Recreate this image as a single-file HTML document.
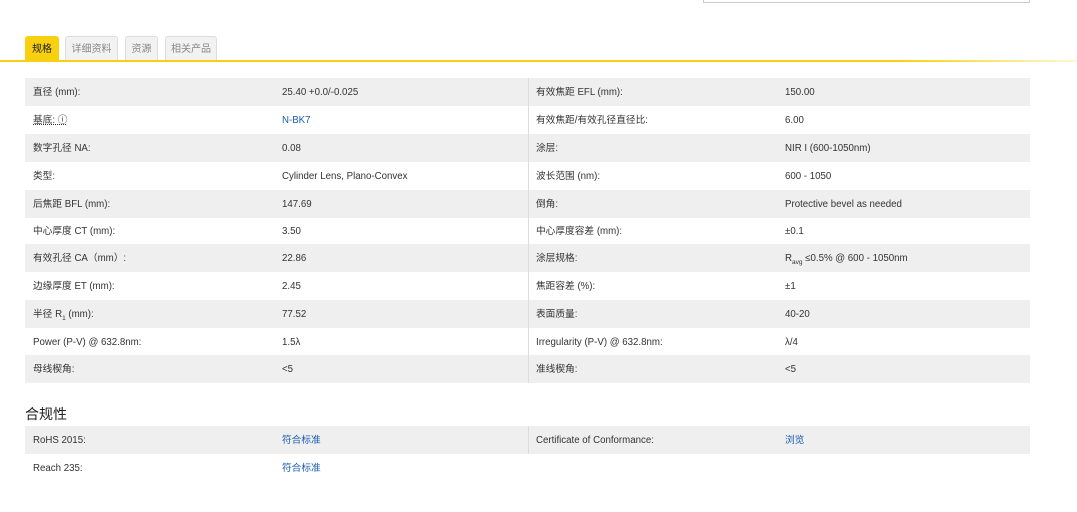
<!DOCTYPE html>
<html><head><meta charset="utf-8"><style>
*{margin:0;padding:0;box-sizing:border-box}
body{width:1077px;height:512px;background:#fff;position:relative;overflow:hidden;font-family:"Liberation Sans","Noto Sans CJK SC",sans-serif;color:#333;font-size:9.7px}
.inp{position:absolute;left:703px;top:-2px;width:327px;height:5px;border:1px solid #ccc;border-top:none}
.tab{position:absolute;top:36px;height:25px;border:1px solid #ddd;border-bottom:none;border-radius:3px 3px 0 0;background:#f2f2f2;color:#888;font-size:10px;line-height:26px;text-align:center}
.tab.a{background:#f8d00f;border-color:#f8d00f;color:#222}
.line{position:absolute;left:0;top:60px;width:1077px;height:2px;background:linear-gradient(90deg,#f8d00f 0,#f8d00f 83%,#fff7d0 100%)}
.row{position:absolute;left:25px;width:1005px;height:28px;line-height:30px}
.row.g{background:#efefef}
.row span{position:absolute;top:0;white-space:nowrap}
.l1{left:8px}.v1{left:257px}.l2{left:511px}.v2{left:760px}
.div{position:absolute;left:503px;top:0;width:1px;height:28px;background:#ddd}
a{color:#1a5bb0;text-decoration:none}
h3{position:absolute;left:25px;top:404px;font-size:14px;font-weight:normal;color:#222}
sub{font-size:6.5px}
</style></head><body>
<div class="inp"></div>
<div class="tab a" style="left:25px;width:34px">规格</div>
<div class="tab" style="left:65px;width:53px">详细资料</div>
<div class="tab" style="left:125px;width:33px">资源</div>
<div class="tab" style="left:165px;width:52px">相关产品</div>
<div class="line"></div>

<div class="row g" style="top:78px"><span class="l1">直径 (mm):</span><span class="v1">25.40 +0.0/-0.025</span><i class="div"></i><span class="l2">有效焦距 EFL (mm):</span><span class="v2">150.00</span></div>
<div class="row" style="top:106px"><span class="l1" style="text-decoration:underline dotted">基底: ⓘ</span><span class="v1"><a>N-BK7</a></span><i class="div"></i><span class="l2">有效焦距/有效孔径直径比:</span><span class="v2">6.00</span></div>
<div class="row g" style="top:134px"><span class="l1">数字孔径 NA:</span><span class="v1">0.08</span><i class="div"></i><span class="l2">涂层:</span><span class="v2">NIR I (600-1050nm)</span></div>
<div class="row" style="top:162px"><span class="l1">类型:</span><span class="v1">Cylinder Lens, Plano-Convex</span><i class="div"></i><span class="l2">波长范围 (nm):</span><span class="v2">600 - 1050</span></div>
<div class="row g" style="top:190px"><span class="l1">后焦距 BFL (mm):</span><span class="v1">147.69</span><i class="div"></i><span class="l2">倒角:</span><span class="v2">Protective bevel as needed</span></div>
<div class="row" style="top:217px"><span class="l1">中心厚度 CT (mm):</span><span class="v1">3.50</span><i class="div"></i><span class="l2">中心厚度容差 (mm):</span><span class="v2">±0.1</span></div>
<div class="row g" style="top:244px"><span class="l1">有效孔径 CA（mm）:</span><span class="v1">22.86</span><i class="div"></i><span class="l2">涂层规格:</span><span class="v2">R<sub>avg</sub> ≤0.5% @ 600 - 1050nm</span></div>
<div class="row" style="top:272px"><span class="l1">边缘厚度 ET (mm):</span><span class="v1">2.45</span><i class="div"></i><span class="l2">焦距容差 (%):</span><span class="v2">±1</span></div>
<div class="row g" style="top:300px"><span class="l1">半径 R<sub>1</sub> (mm):</span><span class="v1">77.52</span><i class="div"></i><span class="l2">表面质量:</span><span class="v2">40-20</span></div>
<div class="row" style="top:328px"><span class="l1">Power (P-V) @ 632.8nm:</span><span class="v1">1.5λ</span><i class="div"></i><span class="l2">Irregularity (P-V) @ 632.8nm:</span><span class="v2">λ/4</span></div>
<div class="row g" style="top:355px"><span class="l1">母线楔角:</span><span class="v1">&lt;5</span><i class="div"></i><span class="l2">准线楔角:</span><span class="v2">&lt;5</span></div>

<h3>合规性</h3>
<div class="row g" style="top:426px"><span class="l1">RoHS 2015:</span><span class="v1"><a>符合标准</a></span><i class="div"></i><span class="l2">Certificate of Conformance:</span><span class="v2"><a>浏览</a></span></div>
<div class="row" style="top:454px"><span class="l1">Reach 235:</span><span class="v1"><a>符合标准</a></span></div>
</body></html>
